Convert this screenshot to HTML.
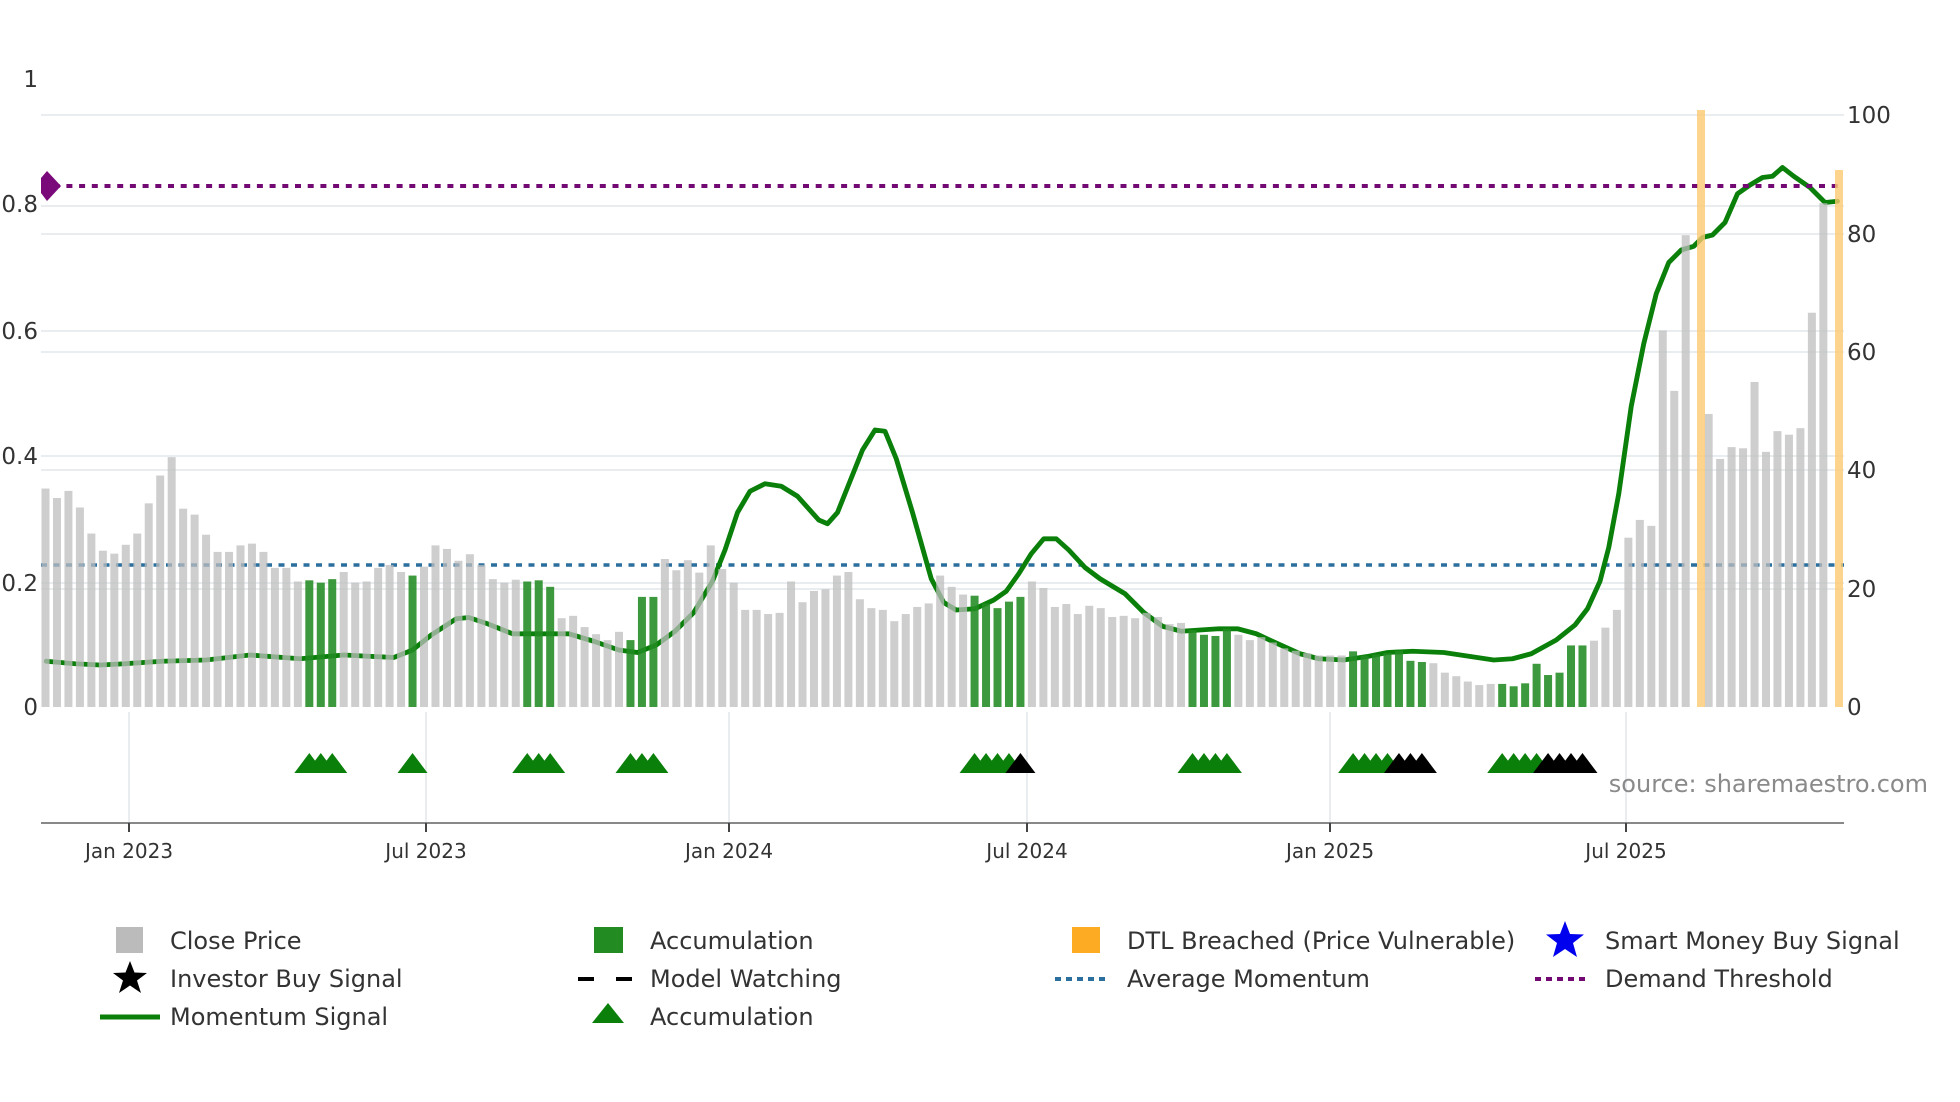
<!DOCTYPE html>
<html><head><meta charset="utf-8"><style>
html,body{margin:0;padding:0;background:#fff;}
svg{display:block;}
.ax{font-family:"DejaVu Sans",sans-serif;font-size:23px;fill:#333;}
.dt{font-family:"DejaVu Sans",sans-serif;font-size:20px;fill:#333;}
.lg{font-family:"DejaVu Sans",sans-serif;font-size:24px;fill:#333;}
</style></head><body>
<svg id="s" width="1960" height="1102" viewBox="0 0 1960 1102" xmlns="http://www.w3.org/2000/svg">
<g stroke="#e9edf0" stroke-width="2">
<line x1="41" x2="1844" y1="115" y2="115"/><line x1="41" x2="1844" y1="206" y2="206"/>
<line x1="41" x2="1844" y1="234" y2="234"/><line x1="41" x2="1844" y1="331" y2="331"/>
<line x1="41" x2="1844" y1="352" y2="352"/><line x1="41" x2="1844" y1="456" y2="456"/>
<line x1="41" x2="1844" y1="470" y2="470"/><line x1="41" x2="1844" y1="583" y2="583"/>
<line x1="41" x2="1844" y1="589" y2="589"/>
<line x1="129" x2="129" y1="712" y2="823"/><line x1="426" x2="426" y1="712" y2="823"/>
<line x1="729" x2="729" y1="712" y2="823"/><line x1="1027" x2="1027" y1="712" y2="823"/>
<line x1="1330" x2="1330" y1="712" y2="823"/><line x1="1626" x2="1626" y1="712" y2="823"/>
</g>
<line x1="41" x2="1844" y1="565" y2="565" stroke="#2b6f9e" stroke-width="3.5" stroke-dasharray="6 6.5"/>
<g transform="scale(1.25)">
<polyline fill="none" stroke="#0a800a" stroke-width="3.9" stroke-linejoin="round" stroke-linecap="round" points="37,529 60,531 80,532 100,531 130,529 165,528 200,524 240,527 275,524 315,526 330,520 345,508 365,495 375,494 390,499 410,507 430,507 455,507 475,513 495,520 510,522 525,516 540,505 555,490 570,465 580,440 590,410 600,393 612,387 625,389 638,397 655,416 662,419 670,410 680,385 690,360 700,344 708,345 717,367 730,410 745,463 755,482 765,488 780,487 795,480 805,473 815,459 825,443 835,431 845,431 855,440 868,454 880,463 900,475 915,490 930,501 945,505 960,504 975,503 990,503 1005,507 1020,514 1040,523 1055,527 1075,528 1095,525 1110,522 1130,521 1155,522 1175,525 1195,528 1210,527 1225,523 1245,512 1260,500 1270,487 1280,465 1287,438 1295,395 1305,325 1315,275 1325,235 1335,210 1345,200 1355,197 1362,190 1370,188 1380,178 1390,155 1400,148 1410,142 1418,141 1426,134 1435,141 1448,150 1460,162 1470,161"/>
</g>
<g id="bars"></g>
<line x1="41" x2="1844" y1="186" y2="186" stroke="#730a73" stroke-width="4" stroke-dasharray="6 6.7"/>
<polygon points="41,178 47,171 61,186 47,201 41,193" fill="#7a0a7a"/>
<g id="orange" fill="#fdc970" fill-opacity="0.8">
<rect x="1697" y="110" width="8" height="597"/>
<rect x="1835" y="170" width="8" height="537"/>
</g>
<g id="tri"></g>
<line x1="41" x2="1844" y1="823" y2="823" stroke="#888" stroke-width="2"/>
<g stroke="#444" stroke-width="2">
<line x1="129" x2="129" y1="823" y2="832"/><line x1="426" x2="426" y1="823" y2="832"/>
<line x1="729" x2="729" y1="823" y2="832"/><line x1="1027" x2="1027" y1="823" y2="832"/>
<line x1="1330" x2="1330" y1="823" y2="832"/><line x1="1626" x2="1626" y1="823" y2="832"/>
</g>
<g class="dt" text-anchor="middle">
<text x="129" y="858">Jan 2023</text><text x="426" y="858">Jul 2023</text>
<text x="729" y="858">Jan 2024</text><text x="1027" y="858">Jul 2024</text>
<text x="1330" y="858">Jan 2025</text><text x="1626" y="858">Jul 2025</text>
</g>
<g class="ax" text-anchor="end">
<text x="38" y="87">1</text><text x="38" y="212">0.8</text><text x="38" y="339">0.6</text>
<text x="38" y="464">0.4</text><text x="38" y="591">0.2</text><text x="38" y="715">0</text>
</g>
<g class="ax">
<text x="1847" y="123">100</text><text x="1847" y="242">80</text><text x="1847" y="360">60</text>
<text x="1847" y="478">40</text><text x="1847" y="597">20</text><text x="1847" y="715">0</text>
</g>
<text x="1928" y="792" text-anchor="end" font-family="DejaVu Sans,sans-serif" font-size="24" fill="#8a8a8a">source: sharemaestro.com</text>
<rect x="116" y="927" width="27" height="26" fill="#bbbbbb"/>
<text class="lg" x="170" y="949">Close Price</text>
<polygon fill="#000" points="130,961 134.5,972.5 147,973 137,980.5 141,993 130,985.5 119,993 123,980.5 113,973 125.5,972.5"/>
<text class="lg" x="170" y="987">Investor Buy Signal</text>
<line x1="100" x2="160" y1="1017" y2="1017" stroke="#0a800a" stroke-width="5"/>
<text class="lg" x="170" y="1025">Momentum Signal</text>
<rect x="594" y="927" width="29" height="26" fill="#228b22"/>
<text class="lg" x="650" y="949">Accumulation</text>
<line x1="578" x2="632" y1="979" y2="979" stroke="#000" stroke-width="4" stroke-dasharray="16 22"/>
<text class="lg" x="650" y="987">Model Watching</text>
<polygon points="592,1023 608,1003 624,1023" fill="#0a800a"/>
<text class="lg" x="650" y="1025">Accumulation</text>
<rect x="1072" y="927" width="28" height="26" fill="#fdab22"/>
<text class="lg" x="1127" y="949">DTL Breached (Price Vulnerable)</text>
<line x1="1055" x2="1110" y1="979" y2="979" stroke="#2b6f9e" stroke-width="4" stroke-dasharray="6 5"/>
<text class="lg" x="1127" y="987">Average Momentum</text>
<polygon fill="#0000ee" points="1565,921 1570,934 1584,934.5 1573,943 1577,957 1565,949 1553,957 1557,943 1546,934.5 1560,934"/>
<text class="lg" x="1605" y="949">Smart Money Buy Signal</text>
<line x1="1535" x2="1589" y1="979" y2="979" stroke="#730a73" stroke-width="4" stroke-dasharray="6 5"/>
<text class="lg" x="1605" y="987">Demand Threshold</text>
</svg>
<script>
(function(){
var v=[36.9,35.3,36.5,33.7,29.3,26.4,25.9,27.4,29.3,34.4,39.1,42.2,33.5,32.5,29.1,26.2,26.2,27.3,27.6,26.2,23.5,23.5,21.2,21.4,21.0,21.6,22.8,21.0,21.2,23.5,24.0,22.8,22.2,23.7,27.3,26.7,24.7,25.8,24.0,21.6,21.0,21.5,21.2,21.4,20.3,15.0,15.4,13.5,12.3,11.3,12.7,11.3,18.6,18.6,25.0,23.1,24.8,22.7,27.3,23.3,21.0,16.4,16.4,15.7,15.9,21.2,17.7,19.6,19.9,22.2,22.8,18.2,16.7,16.4,14.5,15.7,16.9,17.5,22.2,20.3,19.0,
18.8,17.5,16.7,17.8,18.6,21.2,20.1,16.9,17.4,15.7,17.1,16.7,15.2,15.4,15.0,15.9,15.2,14.0,14.2,13.0,12.2,12.0,13.2,12.2,11.3,11.8,10.9,9.9,9.5,9.1,8.7,8.7,8.7,9.4,8.7,8.9,9.1,9.5,7.8,7.6,7.4,5.8,5.2,4.3,3.7,3.9,3.9,3.5,4.0,7.3,5.4,5.8,10.4,10.4,11.2,13.4,16.4,28.6,31.6,30.6,63.6,53.4,79.7,-1,49.5,41.9,43.9,43.7,54.9,43.1,46.6,46.0,47.1,66.6,85.1,-1];
var green={};[23,24,25,32,42,43,44,51,52,53,81,82,83,84,85,100,101,102,103,114,115,116,117,118,119,120,127,128,129,130,131,132,133,134].forEach(function(i){green[i]=1;});
var ns="http://www.w3.org/2000/svg",g=document.getElementById('bars'),t=document.getElementById('tri');
for(var i=0;i<v.length;i++){ if(v[i]<0)continue;
 var cx=45.5+11.47*i,h=v[i]*5.92,r=document.createElementNS(ns,'rect');
 r.setAttribute('x',cx-4);r.setAttribute('width',8);r.setAttribute('y',707-h);r.setAttribute('height',h);
 r.setAttribute('fill',green[i]?'#228b22':'#bdbdbd');r.setAttribute('fill-opacity',green[i]?'0.88':'0.75');g.appendChild(r);}
var tris=[[23,0],[24,0],[25,0],[32,0],[42,0],[43,0],[44,0],[51,0],[52,0],[53,0],[81,0],[82,0],[83,0],[84,0],[85,1],[100,0],[101,0],[102,0],[103,0],[114,0],[115,0],[116,0],[117,0],[118,1],[119,1],[120,1],[127,0],[128,0],[129,0],[130,0],[131,1],[132,1],[133,1],[134,1]];
tris.forEach(function(a){var cx=45.5+11.47*a[0],p=document.createElementNS(ns,'polygon');
 p.setAttribute('points',(cx-15)+',773 '+cx+',753 '+(cx+15)+',773');p.setAttribute('fill',a[1]?'#000':'#0a800a');t.appendChild(p);});
})();
</script>
</body></html>
